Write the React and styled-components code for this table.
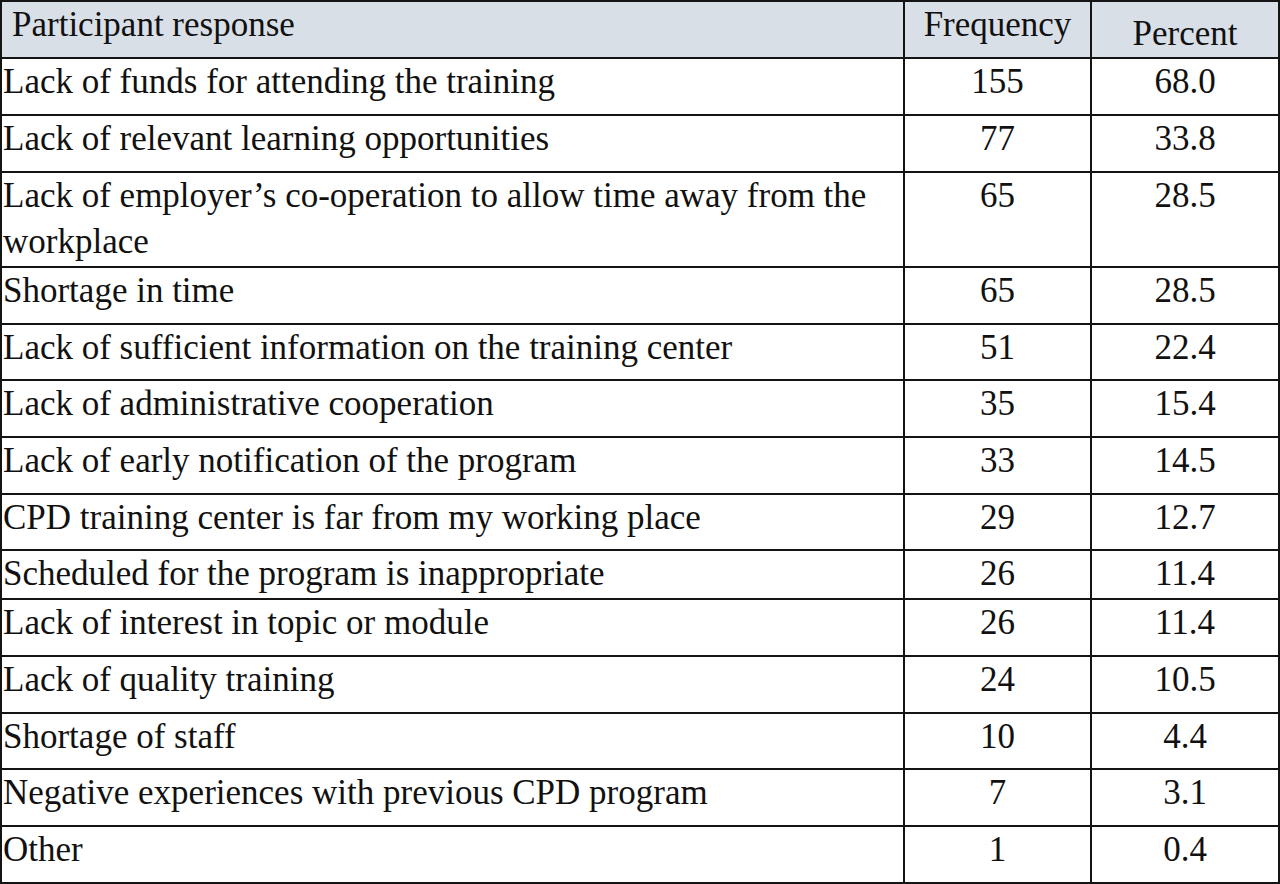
import React from 'react';
import styled, { createGlobalStyle } from 'styled-components';

const GlobalStyle = createGlobalStyle`
  html, body {
    margin: 0;
    padding: 0;
    background: #ffffff;
  }
  body {
    font-family: "Liberation Serif", "Times New Roman", serif;
    color: #111111;
  }
`;

const Table = styled.table`
  border-collapse: collapse;
  table-layout: fixed;
  width: 1278px;
  margin: 0;
  font-family: "Liberation Serif", "Times New Roman", serif;
  font-size: 35px;
  line-height: 46px;
  color: #111111;
`;

const Row = styled.tr`
  height: ${(p) => p.$h}px;
`;

const HeadCell = styled.th`
  background: #d9dfe7;
  border: 2px solid #141414;
  font-weight: normal;
  text-align: ${(p) => (p.$left ? 'left' : 'center')};
  vertical-align: top;
  padding: ${(p) => (p.$low ? '9px' : '0')} 0 0 ${(p) => (p.$left ? '10px' : '0')};
  height: 53px;
  box-sizing: border-box;
`;

const Cell = styled.td`
  border: 2px solid #141414;
  text-align: ${(p) => (p.$left ? 'left' : 'center')};
  vertical-align: top;
  padding: 0 0 0 ${(p) => (p.$left ? '1px' : '0')};
  box-sizing: border-box;
`;

const rows = [
  ['Lack of funds for attending the training', '155', '68.0', 57],
  ['Lack of relevant learning opportunities', '77', '33.8', 57],
  [
    'Lack of employer\u2019s co-operation to allow time away from the workplace',
    '65',
    '28.5',
    95,
  ],
  ['Shortage in time', '65', '28.5', 57],
  ['Lack of sufficient information on the training center', '51', '22.4', 56],
  ['Lack of administrative cooperation', '35', '15.4', 57],
  ['Lack of early notification of the program', '33', '14.5', 57],
  ['CPD training center is far from my working place', '29', '12.7', 56],
  ['Scheduled for the program is inappropriate', '26', '11.4', 49],
  ['Lack of interest in topic or module', '26', '11.4', 57],
  ['Lack of quality training', '24', '10.5', 57],
  ['Shortage of staff', '10', '4.4', 56],
  ['Negative experiences with previous CPD program', '7', '3.1', 57],
  ['Other', '1', '0.4', 57],
];

const App = () => (
  <>
    <GlobalStyle />
    <Table>
      <colgroup>
        <col style={{ width: 903 }} />
        <col style={{ width: 187 }} />
        <col style={{ width: 188 }} />
      </colgroup>
      <thead>
        <Row $h={57}>
          <HeadCell $left>Participant response</HeadCell>
          <HeadCell>Frequency</HeadCell>
          <HeadCell $low>Percent</HeadCell>
        </Row>
      </thead>
      <tbody>
        {rows.map(([label, freq, pct, h]) => (
          <Row key={label} $h={h}>
            <Cell $left>{label}</Cell>
            <Cell>{freq}</Cell>
            <Cell>{pct}</Cell>
          </Row>
        ))}
      </tbody>
    </Table>
  </>
);

export default App;
